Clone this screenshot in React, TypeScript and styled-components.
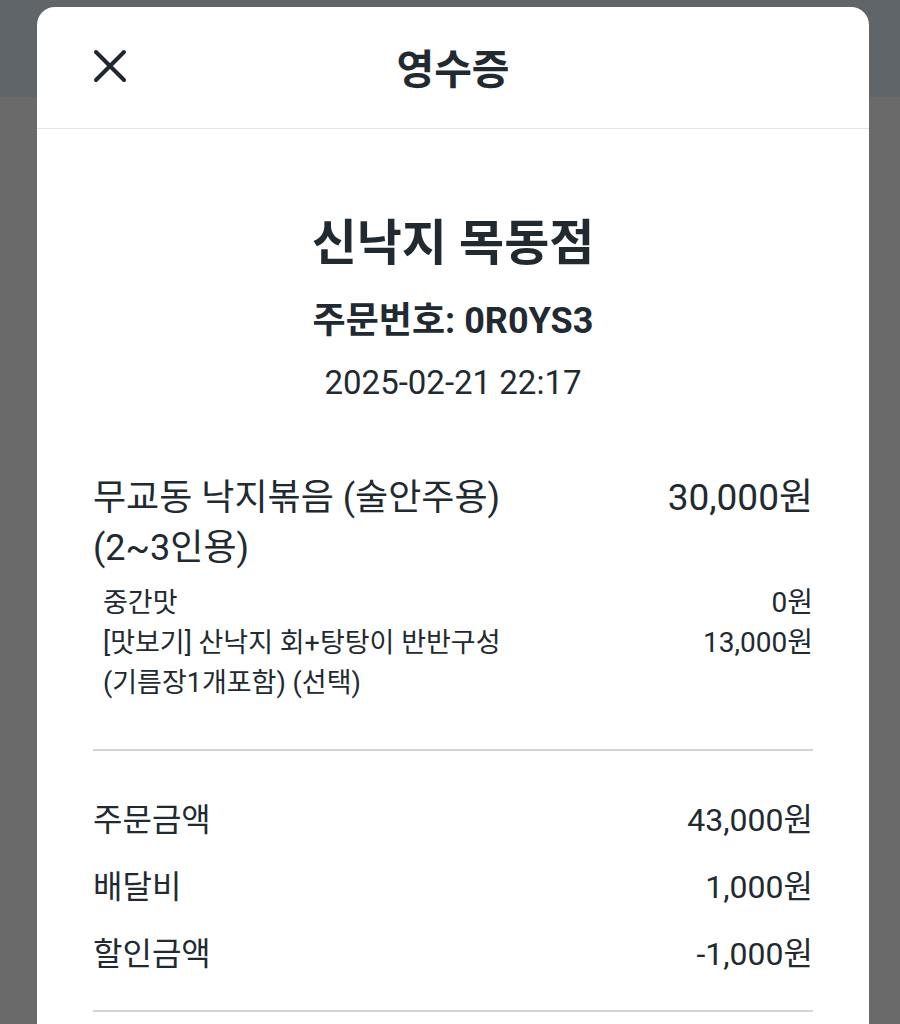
import React from "react";
import styled, { createGlobalStyle } from "styled-components";

const Global = createGlobalStyle`
  html, body { margin: 0; padding: 0; }
  body {
    background: linear-gradient(#5f6569 0, #5f6569 97px, #6a6a6a 97px, #6a6a6a 100%);
    min-height: 1024px;
    font-family: Roboto, "Noto Sans CJK KR", sans-serif;
    color: #222a31;
    overflow: hidden;
  }
`;

const Sheet = styled.div`
  margin: 7px 31px 0 37px;
  background: #fff;
  border-radius: 18px 18px 0 0;
  min-height: 1017px;
`;

const Header = styled.header`
  height: 121px;
  border-bottom: 1px solid #e4e5e6;
  display: grid;
  grid-template-columns: 1fr auto 1fr;
  align-items: center;
  padding: 0 56px;
`;

const CloseBtn = styled.button`
  width: 34px;
  height: 34px;
  padding: 0;
  border: 0;
  background: none;
  display: flex;
  align-items: center;
  justify-content: center;
  justify-self: start;
  margin-top: -4px;
`;

const Title = styled.h1`
  margin: 0;
  font-size: 41px;
  font-weight: 700;
  margin-top: -4px;
`;

const Body = styled.main`
  padding: 85px 56px 0;
`;

const Store = styled.h2`
  margin: 0;
  text-align: center;
  font-size: 49px;
  line-height: 60px;
  font-weight: 700;
`;

const OrderNo = styled.div`
  margin-top: 25px;
  text-align: center;
  font-size: 36px;
  line-height: 44px;
  font-weight: 700;
`;

const DateText = styled.div`
  margin-top: 20px;
  text-align: center;
  font-size: 33px;
  line-height: 40px;
`;

const ItemRow = styled.div`
  margin-top: 70px;
  display: flex;
  justify-content: space-between;
  align-items: flex-start;
  gap: 24px;
`;

const ItemName = styled.div`
  font-size: 36px;
  line-height: 50px;
  max-width: 440px;
  word-break: keep-all;
`;

const Price = styled.div`
  font-size: 37px;
  line-height: 50px;
  white-space: nowrap;
  text-align: right;
`;

const Options = styled.div`
  margin-top: 10px;
  padding-left: 10px;
  display: flex;
  flex-direction: column;
`;

const OptionRow = styled.div`
  display: flex;
  justify-content: space-between;
  align-items: flex-start;
  gap: 20px;
  font-size: 27px;
  line-height: 40px;
`;

const OptionName = styled.div`
  max-width: 410px;
  word-break: keep-all;
`;

const OptionPrice = styled.div`
  white-space: nowrap;
  font-size: 28px;
`;

const Divider = styled.hr<{ $top: number }>`
  margin: ${(p) => p.$top}px 0 0;
  border: 0;
  border-top: 2px solid #d3d4d5;
`;

const Totals = styled.div`
  padding-top: 32px;
  display: flex;
  flex-direction: column;
`;

const TotalRow = styled.div`
  height: 67px;
  display: flex;
  justify-content: space-between;
  align-items: center;
  font-size: 32px;
`;

const CloseIcon = () => (
  <svg width="34" height="34" viewBox="0 0 34 34" fill="none">
    <path d="M3 3 L31 31 M31 3 L3 31" stroke="#1f2830" strokeWidth="4" strokeLinecap="round" />
  </svg>
);

export default function App() {
  return (
    <>
      <Global />
      <Sheet>
        <Header>
          <CloseBtn aria-label="닫기">
            <CloseIcon />
          </CloseBtn>
          <Title>영수증</Title>
          <span />
        </Header>
        <Body>
          <Store>신낙지 목동점</Store>
          <OrderNo>주문번호: 0R0YS3</OrderNo>
          <DateText>2025-02-21 22:17</DateText>
          <ItemRow>
            <ItemName>무교동 낙지볶음 (술안주용) (2~3인용)</ItemName>
            <Price>30,000원</Price>
          </ItemRow>
          <Options>
            <OptionRow>
              <OptionName>중간맛</OptionName>
              <OptionPrice>0원</OptionPrice>
            </OptionRow>
            <OptionRow>
              <OptionName>[맛보기] 산낙지 회+탕탕이 반반구성 (기름장1개포함) (선택)</OptionName>
              <OptionPrice>13,000원</OptionPrice>
            </OptionRow>
          </Options>
          <Divider $top={46} />
          <Totals>
            <TotalRow>
              <span>주문금액</span>
              <span>43,000원</span>
            </TotalRow>
            <TotalRow>
              <span>배달비</span>
              <span>1,000원</span>
            </TotalRow>
            <TotalRow>
              <span>할인금액</span>
              <span>-1,000원</span>
            </TotalRow>
          </Totals>
          <Divider $top={26} />
        </Body>
      </Sheet>
    </>
  );
}
